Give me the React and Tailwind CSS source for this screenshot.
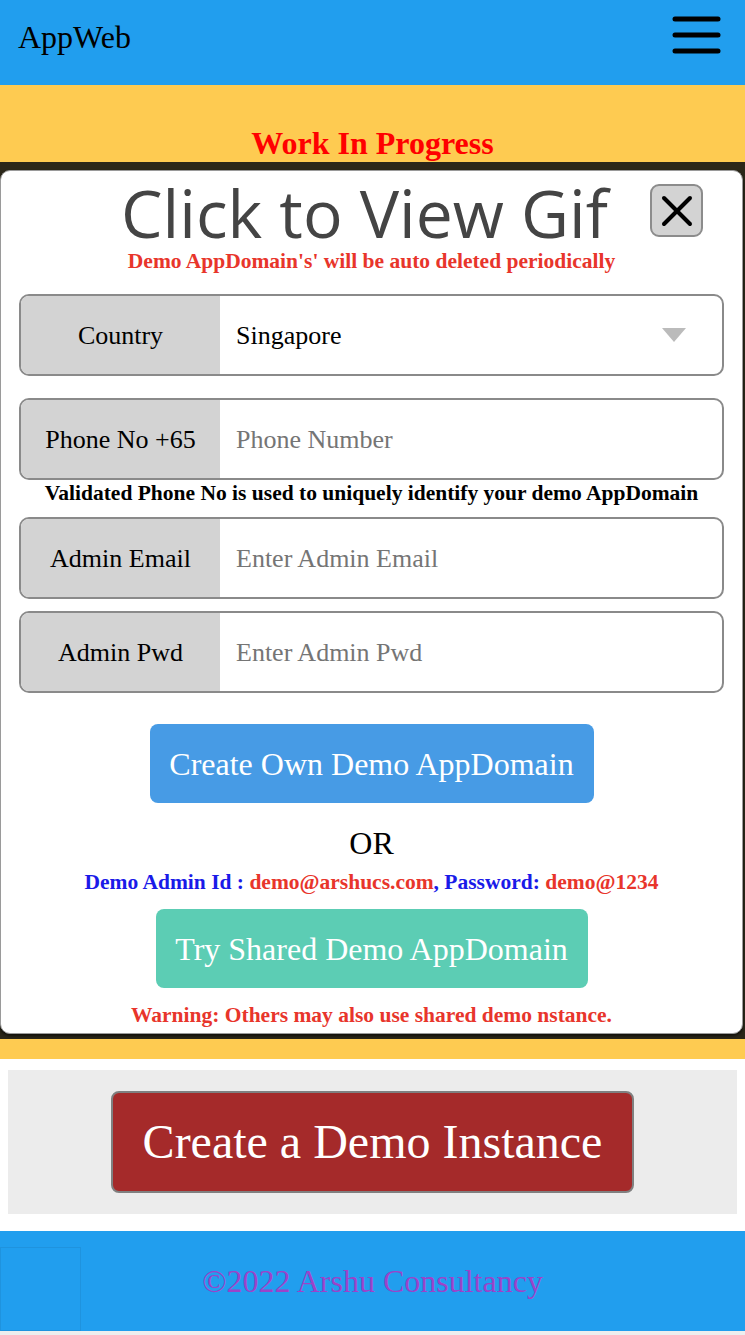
import React from "react";

const serif = { fontFamily: '"Liberation Serif", "Times New Roman", serif' };

function Group({ label, children }) {
  return (
    <div className="mx-[18px] flex h-[82px] overflow-hidden rounded-[10px] border-2 border-[#8a8a8a] bg-white">
      <div className="flex w-[199px] shrink-0 items-center justify-center bg-[#d3d3d3] text-[26px] text-black">
        {label}
      </div>
      <div className="flex flex-1 items-center pl-[16px] pr-[36px] text-[26px]">{children}</div>
    </div>
  );
}

export default function App() {
  return (
    <div className="w-[745px] bg-white" style={serif}>
      {/* Header */}
      <div className="flex h-[85px] items-start justify-between bg-[#219eee] pl-[18px] pr-[23px]">
        <div className="pt-[19px] text-[32px] leading-[36px] text-black">AppWeb</div>
        <svg className="mt-[15px]" width="50" height="42" viewBox="0 0 50 42">
          <g stroke="#000" strokeWidth="5" strokeLinecap="round">
            <line x1="3" y1="4" x2="46" y2="4" />
            <line x1="3" y1="20" x2="46" y2="20" />
            <line x1="3" y1="36" x2="46" y2="36" />
          </g>
        </svg>
      </div>

      {/* Yellow section */}
      <div className="bg-[#fecb51] pt-[40px] pb-[20px]">
        <div className="text-center text-[32px] font-bold leading-[36px] text-[#ff0000]">Work In Progress</div>
        <div className="mt-[1px] bg-[#2b2719] pt-[8px] pb-[5px]">
          <div className="mr-[2px] rounded-[10px] border border-[#9a9a9a] bg-white pb-[7px] shadow-[0_2px_3px_rgba(0,0,0,0.6)]">
            <div className="relative pt-[8px]">
              <div
                className="h-[66px] pr-[14px] text-center text-[66px] leading-[66px] text-[#444444]"
                style={{ fontFamily: '"Open Sans", "Noto Sans", sans-serif' }}
              >
                Click to View Gif
              </div>
              <button className="absolute top-[13px] right-[39px] flex h-[53px] w-[53px] items-center justify-center rounded-[9px] border-2 border-[#8c8c8c] bg-[#d3d3d3]">
                <svg width="34" height="34" viewBox="0 0 34 34">
                  <g stroke="#000" strokeWidth="4" strokeLinecap="round">
                    <line x1="4" y1="4" x2="30" y2="30" />
                    <line x1="30" y1="4" x2="4" y2="30" />
                  </g>
                </svg>
              </button>
            </div>
            <div className="mt-[5px] text-center text-[21.5px] font-bold leading-[22px] text-[#e8352b]">
              Demo AppDomain's' will be auto deleted periodically
            </div>

            <div className="mt-[22px]">
              <Group label="Country">
                <span className="flex-1 text-black">Singapore</span>
                <svg width="24" height="16" viewBox="0 0 24 16">
                  <polygon points="0,1 24,1 12,15" fill="#bbbbbb" />
                </svg>
              </Group>
            </div>
            <div className="mt-[22px]">
              <Group label="Phone No +65">
                <span className="text-[#757575]">Phone Number</span>
              </Group>
            </div>
            <div className="mt-[1px] text-center text-[21.5px] font-bold leading-[24px] text-black">
              Validated Phone No is used to uniquely identify your demo AppDomain
            </div>
            <div className="mt-[12px]">
              <Group label="Admin Email">
                <span className="text-[#757575]">Enter Admin Email</span>
              </Group>
            </div>
            <div className="mt-[12px]">
              <Group label="Admin Pwd">
                <span className="text-[#757575]">Enter Admin Pwd</span>
              </Group>
            </div>

            <div className="mt-[31px] flex justify-center">
              <button className="flex h-[79px] w-[444px] items-center justify-center rounded-[8px] bg-[#479be5] text-[32px] text-white">
                Create Own Demo AppDomain
              </button>
            </div>
            <div className="mt-[22px] text-center text-[32px] leading-[36px] text-black">OR</div>
            <div className="mt-[10px] text-center text-[21.5px] font-bold leading-[22px]">
              <span className="text-[#1a1ae8]">Demo Admin Id : </span>
              <span className="text-[#e8352b]">demo@arshucs.com</span>
              <span className="text-[#1a1ae8]">, Password: </span>
              <span className="text-[#e8352b]">demo@1234</span>
            </div>
            <div className="mt-[16px] flex justify-center">
              <button className="flex h-[79px] w-[432px] items-center justify-center rounded-[8px] bg-[#5ccdb4] text-[32px] text-white">
                Try Shared Demo AppDomain
              </button>
            </div>
            <div className="mt-[16px] text-center text-[21.5px] font-bold leading-[22px] text-[#e8352b]">
              Warning: Others may also use shared demo nstance.
            </div>
          </div>
        </div>
      </div>

      {/* Demo instance */}
      <div className="pt-[11px] pb-[17px]">
        <div className="mx-[8px] flex h-[144px] items-center justify-center bg-[#ececec]">
          <button className="flex h-[102px] w-[523px] items-center justify-center rounded-[8px] border-2 border-[#808080] bg-[#a52a2a] text-[48px] text-white">
            Create a Demo Instance
          </button>
        </div>
      </div>

      {/* Footer */}
      <div className="relative flex h-[100px] items-center justify-center bg-[#219eee]">
        <div className="absolute top-[16px] left-0 h-[84px] w-[81px] border border-[#1f93de]" />
        <div className="text-[32px] leading-[36px] text-[#9b43c9]">©2022 Arshu Consultancy</div>
      </div>
      <div className="h-[5px] bg-[#eeeeee]" />
    </div>
  );
}
